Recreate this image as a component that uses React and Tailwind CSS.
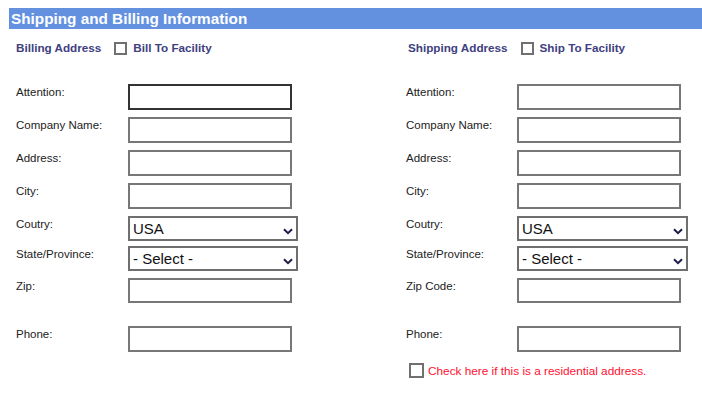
import React from 'react';

const Chevron = () => (
  <svg
    className="pointer-events-none absolute right-[5px] top-[12px]"
    width="10"
    height="7"
    viewBox="0 0 10 7"
    fill="none"
  >
    <path d="M1 1.2 L5 5.2 L9 1.2" stroke="#1c1c4a" strokeWidth="2" />
  </svg>
);

const Box = ({ size = 'h-[13px] w-[13px]' }) => (
  <span className={`${size} inline-block shrink-0 border-2 border-[#707070] bg-white`} />
);

// one label + text field, label sits near the top of the field
const Row = ({ label, labelW, mt, h = 'h-[26px]', dark }) => (
  <div className={`flex items-start ${mt}`}>
    <div className={`${labelW} shrink-0 text-[11.5px] leading-[16px] text-[#222]`}>{label}</div>
    <input
      type="text"
      className={`${h} w-[164px] border-2 bg-white outline-none ${dark ? 'border-[#333]' : 'border-[#777]'}`}
    />
  </div>
);

const SelectRow = ({ label, labelW, mt, value, w }) => (
  <div className={`flex items-start ${mt}`}>
    <div className={`${labelW} shrink-0 text-[11.5px] leading-[16px] text-[#222]`}>{label}</div>
    <div className={`relative h-[25px] ${w}`}>
      <select
        defaultValue={value}
        className="h-[25px] w-full appearance-none border-2 border-[#6f6f6f] bg-white pl-[3px] text-[15px] leading-[21px] text-[#111] outline-none"
      >
        <option>{value}</option>
      </select>
      <Chevron />
    </div>
  </div>
);

const Column = ({ title, check, labelW, selectW, zipLabel, first, children }) => (
  <div className="flex flex-col">
    <div className={`mt-[12px] flex h-[14px] items-center ${first ? '' : 'ml-[2px]'}`}>
      <span className="text-[11.7px] font-bold text-[#40407f]">{title}</span>
      <span className="ml-[13px] flex items-center">
        <Box />
      </span>
      <span className="ml-[6px] text-[11.7px] font-bold text-[#40407f]">{check}</span>
    </div>
    <Row label="Attention:" labelW={labelW} mt="mt-[29px]" dark={first} />
    <Row label="Company Name:" labelW={labelW} mt="mt-[7px]" />
    <Row label="Address:" labelW={labelW} mt="mt-[7px]" />
    <Row label="City:" labelW={labelW} mt="mt-[7px]" />
    <SelectRow label="Coutry:" labelW={labelW} mt="mt-[7px]" value="USA" w={selectW} />
    <SelectRow label="State/Province:" labelW={labelW} mt="mt-[5px]" value="- Select -" w={selectW} />
    <Row label={zipLabel} labelW={labelW} mt="mt-[7px]" h="h-[25px]" />
    <Row label="Phone:" labelW={labelW} mt="mt-[23px]" />
    {children}
  </div>
);

export default function App() {
  return (
    <div className="h-[400px] w-[702px] overflow-hidden bg-white font-['Liberation_Sans',Arial,sans-serif]">
      <div className="ml-[9px] mt-[8px] h-[21px] bg-[#6391e0] pl-[2px] text-[15.3px] font-bold leading-[21px] text-white">
        Shipping and Billing Information
      </div>
      <div className="grid grid-cols-[390px_1fr] pl-[16px]">
        <Column
          first
          title="Billing Address"
          check="Bill To Facility"
          labelW="w-[112px]"
          selectW="w-[170px]"
          zipLabel="Zip:"
        />
        <Column
          title="Shipping Address"
          check="Ship To Facility"
          labelW="w-[111px]"
          selectW="w-[171px]"
          zipLabel="Zip Code:"
        >
          <div className="mt-[10px] ml-[3px] flex items-center">
            <Box size="h-[15px] w-[15px]" />
            <span className="ml-[4px] mt-[2px] text-[11.8px] leading-[15px] text-[#ff1030]">
              Check here if this is a residential address.
            </span>
          </div>
        </Column>
      </div>
    </div>
  );
}
